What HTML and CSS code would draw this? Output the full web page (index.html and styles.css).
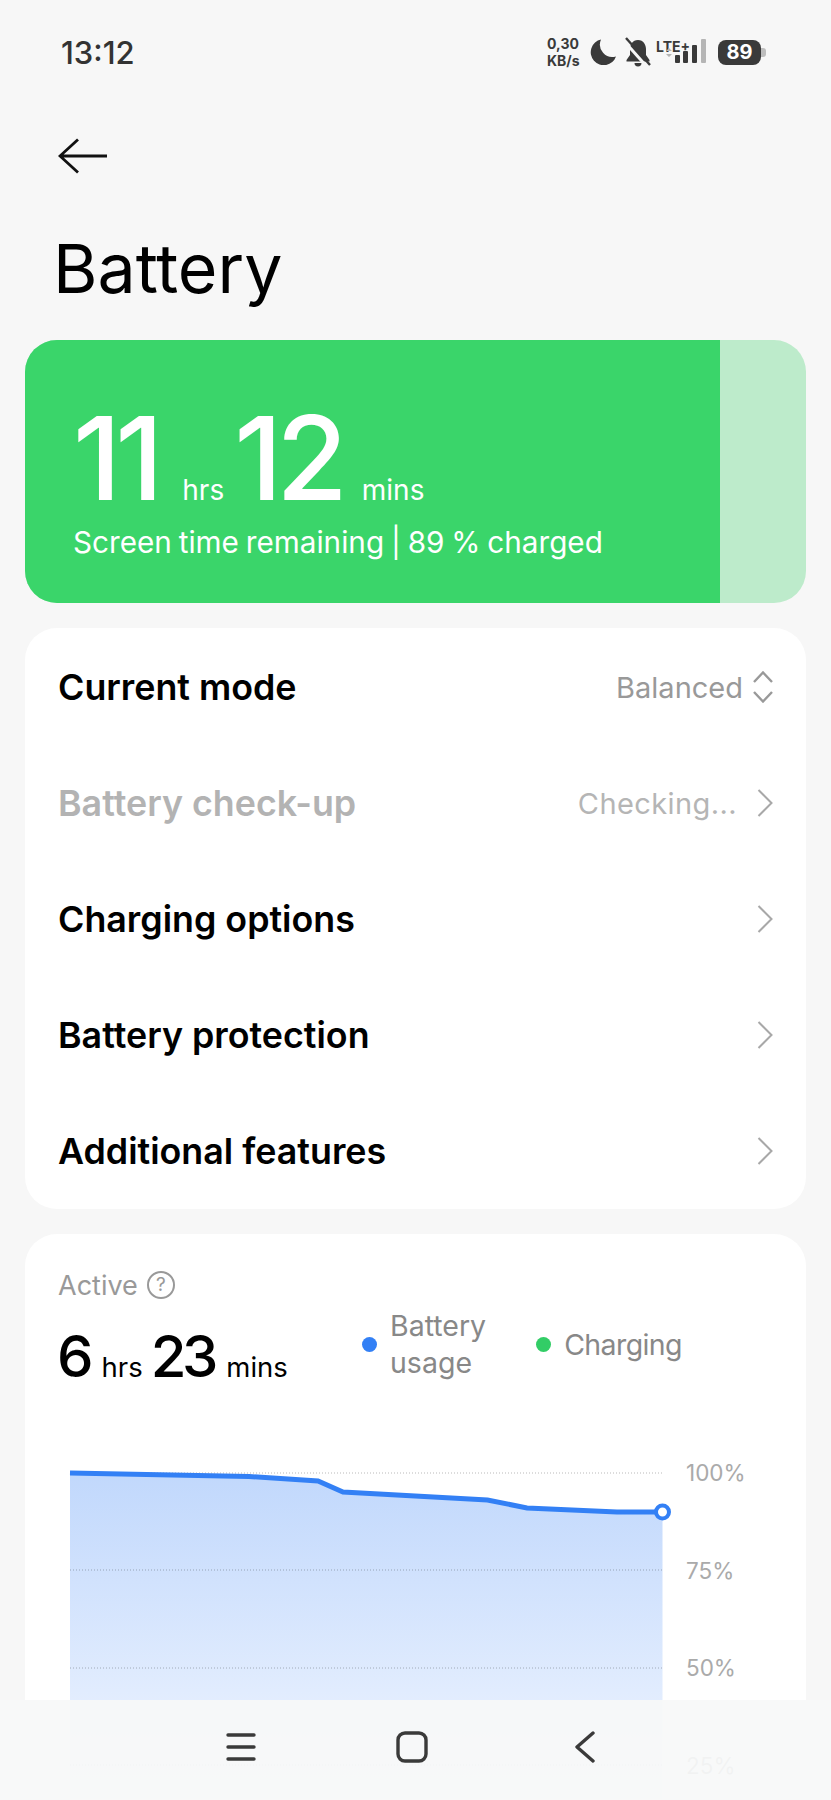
FILE: index.html
```html
<!DOCTYPE html>
<html lang="en">
<head>
    <meta charset="UTF-8">
    <meta name="viewport" content="width=device-width, initial-scale=1.0">
    <title>Battery</title>
    <link rel="stylesheet" href="styles.css">
</head>
<body>
    <header class="status-bar">
        <span class="clock">13:12</span>
        <div class="status-icons">
            <span class="net-speed">0,30<br>KB/s</span>
            <svg class="icon-moon" width="26" height="26" viewBox="0 0 26 26">
                <path d="M11 0.5A13 13 0 1 0 26 17.5A12.5 12.5 0 0 1 11 0.5Z" fill="#3a3a3a"/>
            </svg>
            <svg class="icon-bell" width="28" height="30" viewBox="0 0 28 30">
                <path d="M14 3C8.500 3 6 8 6 12V18L2.500 23V24.500H25.500V23L22 18V12C22 8 19.500 3 14 3Z" fill="#3a3a3a"/>
                <path d="M10.500 26H17.500A3.500 3.500 0 0 1 10.500 26Z" fill="#3a3a3a"/>
                <path d="M0 4L24 31" stroke="#f7f7f7" stroke-width="3" fill="none"/>
                <path d="M2 1L26 28" stroke="#3a3a3a" stroke-width="2.400" fill="none"/>
            </svg>
            <div class="signal">
                <span class="lte">LTE+</span>
                <svg class="signal-bars" width="42" height="26" viewBox="0 0 42 26">
                    <path d="M1 12L4 9L7 12ZM1 15L4 18L7 15Z" fill="#b5b5b5"/>
                    <rect x="10" y="16" width="5" height="8" rx="1" fill="#3a3a3a"/>
                    <rect x="18" y="12" width="5" height="12" rx="1" fill="#3a3a3a"/>
                    <rect x="27" y="6" width="5" height="18" rx="1" fill="#3a3a3a"/>
                    <rect x="36" y="0" width="5" height="24" rx="1" fill="#b5b5b5"/>
                </svg>
            </div>
            <div class="battery-pill"><span class="battery-level">89</span><span class="battery-nub"></span></div>
        </div>
    </header>

    <div class="top-bar">
        <svg width="50" height="36" viewBox="0 0 50 36">
            <path d="M49 18H3M20 1.500L2 18L20 34.500" fill="none" stroke="#111" stroke-width="2.800"/>
        </svg>
    </div>
    <h1 class="page-title">Battery</h1>

    <section class="charge-card">
        <div class="charge-fill">
            <div class="charge-time">
                <span class="big">11</span><span class="unit unit-hrs">hrs</span><span class="big">12</span><span class="unit">mins</span>
            </div>
            <p class="charge-sub">Screen time remaining | 89 % charged</p>
        </div>
    </section>

    <section class="card menu-card">
        <div class="row">
            <span class="row-title">Current mode</span>
            <span class="row-value">Balanced</span>
            <svg class="updown" width="20" height="32" viewBox="0 0 20 32">
                <path d="M1 11L10 1.500L19 11M1 21L10 30.500L19 21" fill="none" stroke="#999" stroke-width="2.400"/>
            </svg>
        </div>
        <div class="row is-disabled">
            <span class="row-title">Battery check-up</span>
            <span class="row-value">Checking...</span>
            <svg class="chevron" width="16" height="28" viewBox="0 0 16 28">
                <path d="M1.500 1L14.500 14L1.500 27" fill="none" stroke="#a8a8a8" stroke-width="2"/>
            </svg>
        </div>
        <div class="row">
            <span class="row-title">Charging options</span>
            <svg class="chevron" width="16" height="28" viewBox="0 0 16 28">
                <path d="M1.500 1L14.500 14L1.500 27" fill="none" stroke="#a8a8a8" stroke-width="2"/>
            </svg>
        </div>
        <div class="row">
            <span class="row-title">Battery protection</span>
            <svg class="chevron" width="16" height="28" viewBox="0 0 16 28">
                <path d="M1.500 1L14.500 14L1.500 27" fill="none" stroke="#a8a8a8" stroke-width="2"/>
            </svg>
        </div>
        <div class="row">
            <span class="row-title">Additional features</span>
            <svg class="chevron" width="16" height="28" viewBox="0 0 16 28">
                <path d="M1.500 1L14.500 14L1.500 27" fill="none" stroke="#a8a8a8" stroke-width="2"/>
            </svg>
        </div>
    </section>

    <section class="card usage-card">
        <div class="active-label">
            <span>Active</span>
            <span class="help">?</span>
        </div>
        <div class="usage-head">
            <div class="usage-time">
                <span class="num">6</span><span class="unit">hrs</span><span class="num">23</span><span class="unit">mins</span>
            </div>
            <div class="legend">
                <span class="dot dot-blue"></span>
                <span class="legend-text">Battery<br>usage</span>
            </div>
            <div class="legend">
                <span class="dot dot-green"></span>
                <span class="legend-text legend-tight">Charging</span>
            </div>
        </div>

        <div class="chart">
            <svg class="plot" width="593" height="336" viewBox="0 0 593 336">
                <defs>
                    <linearGradient id="fade" x1="0" y1="0" x2="0" y2="1">
                        <stop offset="0" stop-color="#c1d8fc"/>
                        <stop offset="1" stop-color="#f1f6ff"/>
                    </linearGradient>
                </defs>
                <path d="M0 10L179 13.500L248 18L273 29L417.500 37L457 45L547 49L592.500 49V336H0Z" fill="url(#fade)"/>
                <path d="M0 10H593M0 107H593M0 205H593M0 302H593" fill="none" stroke="#000" stroke-opacity="0.28" stroke-dasharray="1 2"/>
                <path d="M0 10L179 13.500L248 18L273 29L417.500 37L457 45L547 49L592.500 49" fill="none" stroke="#3380f5" stroke-width="5"/>
                <circle cx="592.500" cy="49" r="6.500" fill="#fff" stroke="#3380f5" stroke-width="4"/>
            </svg>
            <div class="y-labels">
                <span>100%</span>
                <span>75%</span>
                <span>50%</span>
                <span>25%</span>
            </div>
        </div>
    </section>

    <nav class="nav-bar">
        <svg class="nav-menu" width="30" height="30" viewBox="0 0 30 30">
            <path d="M2 3H28M2 15H28M2 27H28" fill="none" stroke="#3a3a3a" stroke-width="3.400" stroke-linecap="round"/>
        </svg>
        <svg class="nav-home" width="32" height="32" viewBox="0 0 32 32">
            <rect x="2" y="2" width="28" height="28" rx="7" fill="none" stroke="#3a3a3a" stroke-width="3.400"/>
        </svg>
        <svg class="nav-back" width="22" height="32" viewBox="0 0 22 32">
            <path d="M19 2L3 16L19 30" fill="none" stroke="#3a3a3a" stroke-width="3.400" stroke-linecap="round" stroke-linejoin="round"/>
        </svg>
    </nav>
</body>
</html>
```

FILE: styles.css
```css
body {
    position: relative;
    height: 1800px;
    margin: 0;
    overflow: hidden;
    background-color: #f7f7f7;
    font-family: Inter, "Noto Sans", sans-serif;
    color: #000;
}

/* status bar */
.status-bar {
    display: flex;
    align-items: center;
    justify-content: space-between;
    height: 104px;
    padding: 0 65px 0 61px;
}
.clock {
    font-size: 31px;
    font-weight: 500;
    color: #333;
}
.status-icons {
    display: flex;
    align-items: center;
}
.net-speed {
    width: 40px;
    font-size: 14px;
    font-weight: 700;
    line-height: 17px;
    color: #3a3a3a;
}
.icon-moon {
    margin-left: 3px;
}
.icon-bell {
    margin-left: 8px;
}
.signal {
    display: flex;
    flex-direction: column;
    align-items: flex-end;
    width: 51px;
    margin-left: 4px;
}
.lte {
    align-self: flex-start;
    height: 0;
    font-size: 14px;
    font-weight: 700;
    line-height: 16px;
    color: #3a3a3a;
}
.signal-bars {
    display: block;
}
.battery-pill {
    display: flex;
    align-items: center;
    margin-left: 11px;
}
.battery-level {
    width: 43px;
    height: 25px;
    border-radius: 8px;
    background-color: #3a3a3a;
    color: #fff;
    font-size: 20px;
    font-weight: 700;
    line-height: 25px;
    text-align: center;
}
.battery-nub {
    width: 5px;
    height: 9px;
    border-radius: 0 3px 3px 0;
    background-color: #bdbdbd;
}

/* header */
.top-bar {
    display: flex;
    align-items: center;
    height: 103px;
    padding-left: 58px;
}
.page-title {
    box-sizing: border-box;
    height: 133px;
    margin: 0;
    padding: 31px 0 0 53px;
    font-size: 68px;
    font-weight: 400;
    line-height: 60px;
}

/* green card */
.charge-card {
    height: 263px;
    margin: 0 25px;
    overflow: hidden;
    border-radius: 32px;
    background-color: #bdebcb;
}
.charge-fill {
    box-sizing: border-box;
    width: 695px;
    height: 100%;
    padding: 56px 0 0 48px;
    background-color: #3ad56a;
    color: #fff;
}
.charge-time {
    display: flex;
    align-items: baseline;
    height: 125px;
}
.charge-time .big {
    font-size: 116px;
    font-weight: 500;
    line-height: 125px;
    letter-spacing: -6px;
}
.charge-time .unit {
    margin: 0 12px 0 20px;
    font-size: 28px;
}
.charge-time .unit-hrs {
    margin: 0 10px 0 25px;
}
.charge-sub {
    margin: 3px 0 0;
    font-size: 29.7px;
    line-height: 36px;
    word-spacing: -1.5px;
}

/* white cards */
.card {
    margin: 25px 25px 0;
    border-radius: 32px;
    background-color: #fff;
}
.menu-card {
    height: 580px;
    padding: 1px 33px 0;
}
.row {
    display: flex;
    align-items: center;
    height: 116px;
}
.row-title {
    flex: 1;
    font-size: 35.8px;
    font-weight: 600;
}
.row-value {
    font-size: 29px;
    color: #999;
}
.updown {
    margin-left: 10px;
}
.chevron {
    margin-left: 20px;
}
.is-disabled .row-title {
    color: #b3b3b3;
}
.is-disabled .row-value {
    color: #b5b5b5;
    letter-spacing: 0.4px;
}

/* usage card */
.usage-card {
    box-sizing: border-box;
    height: 567px;
    margin-bottom: 0;
    padding: 35px 33px 0;
    overflow: hidden;
    border-radius: 32px 32px 0 0;
}
.active-label {
    display: flex;
    align-items: center;
    gap: 9px;
    height: 32px;
    font-size: 27px;
    color: #999;
}
.help {
    width: 24px;
    height: 24px;
    border: 2px solid #999;
    border-radius: 50%;
    font-size: 19px;
    line-height: 24px;
    text-align: center;
}
.usage-head {
    display: flex;
    align-items: center;
    height: 110px;
}
.usage-time {
    display: flex;
    align-items: baseline;
    width: 304px;
    margin-top: -1px;
    margin-left: -1px;
    padding-left: 0;
}
.usage-time .num {
    font-size: 58px;
    font-weight: 500;
    letter-spacing: -4.5px;
}
.usage-time .unit {
    margin: 0 8px 0 12.5px;
    font-size: 27.5px;
}
.legend {
    display: flex;
    align-items: center;
    gap: 13px;
    margin-right: 50px;
    margin-top: -24px;
}
.legend-text {
    font-size: 28.5px;
    line-height: 37px;
    color: #888;
}
.legend-tight {
    letter-spacing: -0.6px;
}
.dot {
    width: 15px;
    height: 15px;
    border-radius: 50%;
}
.dot-blue {
    background-color: #3380f5;
    margin-left: 1px;
}
.dot-green {
    background-color: #32cd66;
}

/* chart */
.chart {
    display: flex;
    gap: 23px;
    margin: 47px 0 0 12px;
}
.plot {
    flex: none;
    margin-top: 5px;
    overflow: visible;
}
.y-labels {
    display: flex;
    flex-direction: column;
    gap: 67.5px;
    font-size: 22.5px;
    line-height: 30px;
    color: #aaa;
}

/* nav bar, lies over the chart */
.nav-bar {
    position: absolute;
    left: 0;
    right: 0;
    bottom: 0;
    display: flex;
    align-items: center;
    box-sizing: border-box;
    height: 100px;
    padding: 0 0 6px 226px;
    background-color: rgba(247, 248, 249, 0.92);
}
.nav-home {
    margin-left: 140px;
}
.nav-back {
    margin-left: 146px;
}
```
